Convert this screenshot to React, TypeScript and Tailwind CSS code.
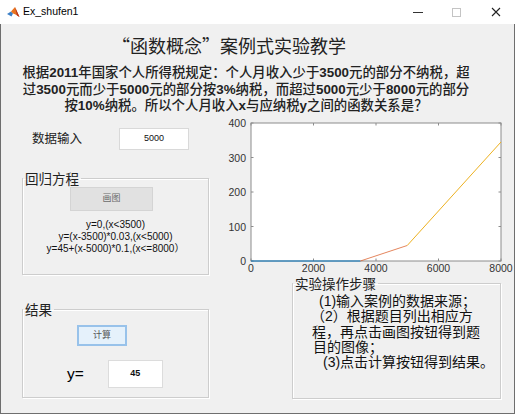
import React from 'react';

const sans = "font-['Liberation_Sans','Noto_Sans_CJK_SC',sans-serif]";
const cjk = "font-['Noto_Sans_CJK_SC',sans-serif]";

const MatlabIcon = () => (
  <svg width="13" height="13" viewBox="0 0 13 13">
    <path d="M0 8 L4 5.5 L6 7.5 L4.5 10.5 Z" fill="#3c7fc6" />
    <path d="M4 5.5 L8 1 L12.5 11 L8.5 8.5 L6 7.5 Z" fill="#e8731f" />
    <path d="M8 1 L12.5 11 L10 9.5 Z" fill="#b8321c" />
  </svg>
);

const Chart = () => {
  const x0 = 21, x1 = 271, y0 = 146, y1 = 8;
  const sx = (v: number) => x0 + (v / 8000) * (x1 - x0);
  const sy = (v: number) => y0 - (v / 400) * (y0 - y1);
  const xt = [0, 2000, 4000, 6000, 8000];
  const yt = [0, 100, 200, 300, 400];
  return (
    <svg width="283" height="161" className="overflow-visible block">
      <rect x={x0} y={y1} width={x1 - x0} height={y0 - y1} fill="#ffffff" stroke="#8c8c8c" strokeWidth="1" />
      {xt.map(v => (
        <g key={v}>
          <line x1={sx(v)} x2={sx(v)} y1={y0} y2={y0 - 2.5} stroke="#8c8c8c" />
          <line x1={sx(v)} x2={sx(v)} y1={y1} y2={y1 + 2.5} stroke="#8c8c8c" />
          <text x={sx(v)} y={157} textAnchor="middle" fontSize="10.5" fill="#333" fontFamily="Liberation Sans, sans-serif">{v}</text>
        </g>
      ))}
      {yt.map(v => (
        <g key={v}>
          <line x1={x0} x2={x0 + 2.5} y1={sy(v)} y2={sy(v)} stroke="#8c8c8c" />
          <line x1={x1} x2={x1 - 2.5} y1={sy(v)} y2={sy(v)} stroke="#8c8c8c" />
          <text x={16} y={sy(v) + 4} textAnchor="end" fontSize="10.5" fill="#333" fontFamily="Liberation Sans, sans-serif">{v}</text>
        </g>
      ))}
      <polyline points={`${sx(0)},${sy(0)} ${sx(3500)},${sy(0)}`} fill="none" stroke="#0072BD" strokeWidth="1" />
      <polyline points={`${sx(3500)},${sy(0)} ${sx(5000)},${sy(45)}`} fill="none" stroke="#D95319" strokeWidth="1" opacity="0.7" />
      <polyline points={`${sx(5000)},${sy(45)} ${sx(8000)},${sy(345)}`} fill="none" stroke="#EDB120" strokeWidth="1" />
    </svg>
  );
};

export default function App() {
  return (
    <div className={`w-[515px] h-[414px] flex flex-col ${sans}`}>
      {/* title bar */}
      <div className="h-[24px] bg-white flex items-center shrink-0">
        <div className="ml-[7px]"><MatlabIcon /></div>
        <span className="ml-[3px] text-[10.5px] text-black">Ex_shufen1</span>
        <div className="ml-auto flex items-center">
          <div className="w-[10px] h-px bg-[#333] mr-[29px]" />
          <div className="w-[9px] h-[9px] border border-[#c4c4c4] mr-[30px]" />
          <svg width="10" height="10" viewBox="0 0 10 10" className="mr-[14px]">
            <path d="M1 1 L9 9 M9 1 L1 9" stroke="#222" strokeWidth="1.1" />
          </svg>
        </div>
      </div>

      {/* body */}
      <div className="flex-1 bg-[#f0f0f0] border-l border-r border-b border-[#6e6e6e]">
        <div className={`mt-[12px] ml-[13px] w-[430px] h-[18px] leading-[18px] text-center text-[18px] text-[#222] ${cjk}`}>
          “函数概念”案例式实验教学
        </div>
        <div className={`mt-[11px] ml-[11px] w-[468px] h-[50px] text-center text-[13.4px] leading-[16.5px] font-medium text-[#222] whitespace-nowrap ${sans}`}>
          根据<b>2011</b>年国家个人所得税规定：个人月收入少于<b>3500</b>元的部分不纳税，超<br />
          过<b>3500</b>元而少于<b>5000</b>元的部分按<b>3%</b>纳税，而超过<b>5000</b>元少于<b>8000</b>元的部分<br />
          按<b>10%</b>纳税。所以个人月收入<b>x</b>与应纳税<b>y</b>之间的函数关系是？
        </div>

        <div className="flex">
          {/* left column */}
          <div className="w-[229px] flex flex-col">
            <div className="mt-[13px] flex items-start">
              <div className={`ml-[26px] mt-[-1px] w-[65px] h-[21px] leading-[21px] pl-[5px] text-[12.5px] text-[#222] ${cjk}`}>数据输入</div>
              <div className="ml-[27px] w-[70px] h-[22px] bg-white border border-[#d9d9d9] flex items-center justify-center text-[9px] text-[#111]">5000</div>
            </div>

            <fieldset className="mt-[20px] ml-[21px] w-[187px] h-[105px] border border-[#cdcdcd] shadow-[1px_1px_0_#ffffff,inset_1px_1px_0_#ffffff]">
              <legend className={`pl-[2px] pr-[2px] text-[13.5px] leading-[16px] text-[#222] ${cjk}`}>回归方程</legend>
              <div className="mt-[1px] ml-[47px] w-[83px] h-[24px] bg-[#e1e1e1] border border-[#d4d4d4] flex items-center justify-center text-[9px] text-[#6a6a6a]">画图</div>
              <div className="mt-[8px] text-center text-[10px] leading-[12px] text-[#111] whitespace-nowrap">
                y=0,(x&lt;3500)<br />
                y=(x-3500)*0.03,(x&lt;5000)<br />
                y=45+(x-5000)*0.1,(x&lt;=8000）
              </div>
            </fieldset>

            <fieldset className="mt-[26px] ml-[21px] w-[187px] h-[97px] border border-[#cdcdcd] shadow-[1px_1px_0_#ffffff,inset_1px_1px_0_#ffffff]">
              <legend className={`pl-[2px] pr-[2px] text-[13.5px] leading-[16px] text-[#222] ${cjk}`}>结果</legend>
              <div className="mt-[8px] ml-[54px] w-[50px] h-[21px] bg-[#e5f1fb] border-2 border-[#98c2ea] flex items-center justify-center text-[9px] text-[#555]">计算</div>
              <div className="mt-[14px] flex items-center">
                <span className="ml-[44px] text-[15.5px] leading-[16px] text-black">y=</span>
                <div className="ml-[24px] w-[55px] h-[28px] bg-white border border-[#dcdcdc] flex items-center justify-center text-[9px] font-bold text-[#111]">45</div>
              </div>
            </fieldset>
          </div>

          {/* right column */}
          <div className="w-[283px] flex flex-col">
            <Chart />
            <fieldset className="ml-[62px] w-[209px] h-[123px] border border-[#cdcdcd] shadow-[1px_1px_0_#ffffff,inset_1px_1px_0_#ffffff]">
              <legend className={`pl-[2px] pr-[2px] text-[13.5px] leading-[14px] text-[#222] ${cjk}`}>实验操作步骤</legend>
              <div className={`mt-[4px] text-[14px] leading-[15.3px] text-[#111] whitespace-nowrap ${sans}`}>
                <div className="pl-[26px]">(1)输入案例的数据来源；</div>
                <div className="pl-[18px]">（2）根据题目列出相应方</div>
                <div className="pl-[19px]">程，再点击画图按钮得到题</div>
                <div className="pl-[20px]">目的图像；</div>
                <div className="pl-[30px]">(3)点击计算按钮得到结果。</div>
              </div>
            </fieldset>
          </div>
        </div>
      </div>
    </div>
  );
}
